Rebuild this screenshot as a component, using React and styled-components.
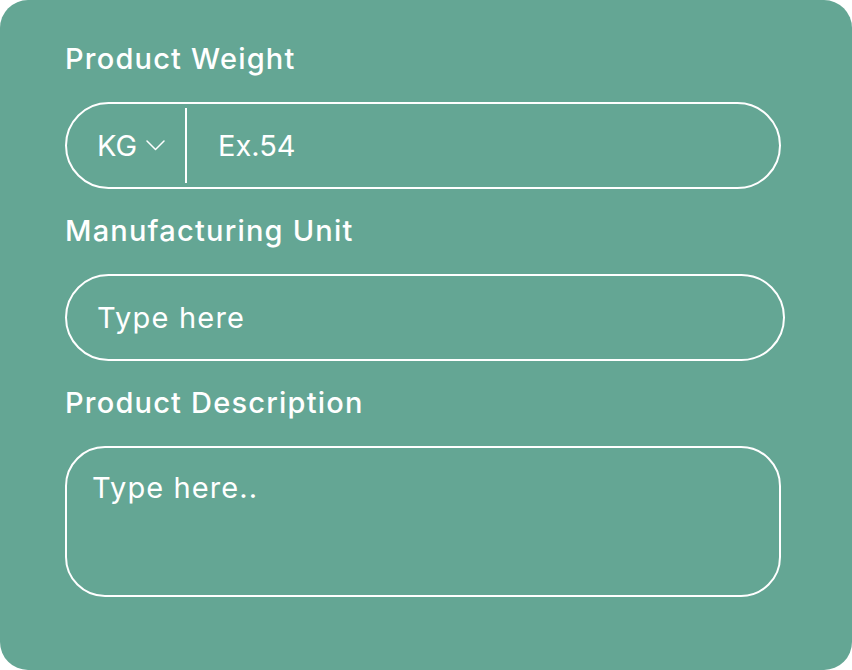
import React from "react";
import styled, { createGlobalStyle } from "styled-components";

const Global = createGlobalStyle`
  html, body { margin: 0; padding: 0; background: #ffffff; }
  body { font-family: Inter, "Noto Sans", sans-serif; }
  * { box-sizing: border-box; }
`;

const Card = styled.div`
  width: 852px;
  height: 670px;
  background: #64a694;
  border-radius: 28px;
  padding: 41px 0 0 65px;
  display: flex;
  flex-direction: column;
  gap: 24px;
`;

const Field = styled.div`
  display: flex;
  flex-direction: column;
  gap: 25px;
`;

const Label = styled.label`
  font-family: Inter, "Noto Sans", sans-serif;
  font-size: 29px;
  line-height: 36px;
  font-weight: 500;
  letter-spacing: 1.2px;
  color: #ffffff;
  height: 36px;
`;

const Pill = styled.div`
  width: ${(p) => p.$w}px;
  height: 87px;
  border: 2px solid #ffffff;
  border-radius: 44px;
  display: flex;
  align-items: center;
  padding: 4px 0;
`;

const UnitSelect = styled.div`
  display: flex;
  align-items: center;
  gap: 9px;
  padding-left: 30px;
  width: 120px;
  height: 100%;
  border-right: 2px solid #ffffff;
  font-size: 29px;
  color: #ffffff;
`;

const TextInput = styled.input`
  flex: 1;
  min-width: 0;
  height: 100%;
  background: transparent;
  border: none;
  outline: none;
  padding: 0 0 0 ${(p) => p.$pl}px;
  font-family: Inter, "Noto Sans", sans-serif;
  font-size: 29px;
  letter-spacing: ${(p) => p.$ls || 0}px;
  color: #ffffff;
  &::placeholder { color: #ffffff; opacity: 1; }
`;

const TextArea = styled.textarea`
  width: 716px;
  height: 151px;
  border: 2px solid #ffffff;
  border-radius: 40px;
  background: transparent;
  outline: none;
  resize: none;
  padding: 22px 25px;
  font-family: Inter, "Noto Sans", sans-serif;
  font-size: 29px;
  line-height: 36px;
  letter-spacing: 1.1px;
  color: #ffffff;
  &::placeholder { color: #ffffff; opacity: 1; }
`;

const Chevron = () => (
  <svg width="19" height="11" viewBox="0 0 19 11" fill="none">
    <polyline points="1,1 9.5,9.5 18,1" stroke="#ffffff" strokeWidth="1.5" strokeLinecap="round" strokeLinejoin="round" />
  </svg>
);

export default function App() {
  return (
    <>
      <Global />
      <Card>
        <Field>
          <Label>Product Weight</Label>
          <Pill $w={716}>
            <UnitSelect>
              KG <Chevron />
            </UnitSelect>
            <TextInput $pl={31} placeholder="Ex.54" />
          </Pill>
        </Field>
        <Field>
          <Label>Manufacturing Unit</Label>
          <Pill $w={720}>
            <TextInput $pl={30} $ls={1.2} placeholder="Type here" />
          </Pill>
        </Field>
        <Field>
          <Label>Product Description</Label>
          <TextArea placeholder="Type here.." />
        </Field>
      </Card>
    </>
  );
}
